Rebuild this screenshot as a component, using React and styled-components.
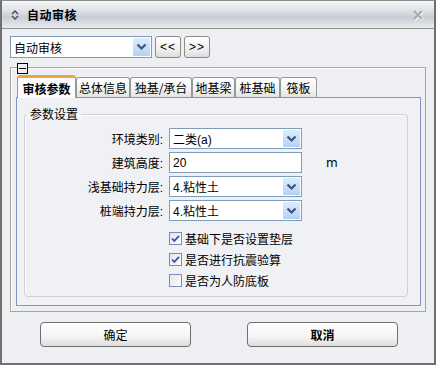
import React from "react";
import styled, { createGlobalStyle } from "styled-components";

const Global = createGlobalStyle`
  body {
    margin: 0;
    font-family: "Liberation Sans", "Noto Sans CJK SC", sans-serif;
    font-size: 12px;
    color: #000;
  }
`;

const Window = styled.div`
  width: 436px;
  height: 365px;
  box-sizing: border-box;
  border: 2px solid #707070;
  border-top: 1px solid #8c8c8c;
  background: #eeeff3;
  display: flex;
  flex-direction: column;
`;

const TitleBar = styled.div`
  height: 27px;
  flex: none;
  display: flex;
  align-items: center;
  padding: 0 10px 0 9px;
  border-bottom: 1px solid #8e8e8e;
  background: linear-gradient(#f6f7f9 0%, #dfe2e7 35%, #c8ccd4 60%, #dde0e5 85%, #e9ebee 100%);
`;

const Title = styled.span`
  margin-left: 8px;
  font-weight: bold;
  font-size: 12px;
  letter-spacing: 0.5px;
  font-family: "Noto Sans CJK SC", sans-serif;
`;

const Close = styled.span`
  margin-left: auto;
  display: flex;
`;

const Body = styled.div`
  padding: 7px 0 0 8px;
`;

const Toolbar = styled.div`
  display: flex;
  gap: 3px;
  height: 22px;
`;

const Combo = styled.div`
  width: ${(p) => p.$w}px;
  height: ${(p) => p.$h || 21}px;
  box-sizing: border-box;
  border: 1px solid #7f9db9;
  background: #fff;
  display: flex;
  align-items: center;
  padding-left: 3px;
  white-space: nowrap;
  overflow: hidden;
`;

const ComboText = styled.span`
  flex: 1;
`;

const DropBtn = styled.span`
  width: 17px;
  align-self: stretch;
  margin: 1px;
  display: flex;
  align-items: center;
  justify-content: center;
  background: linear-gradient(#dcecfd, #b4d2f6);
`;

const SmallBtn = styled.button`
  width: 26px;
  height: 22px;
  padding: 0;
  border: 1px solid #8a8a8a;
  border-radius: 3px;
  background: linear-gradient(#ffffff, #ececec 70%, #dcdcdc);
  font-family: "Liberation Sans", sans-serif;
  font-size: 12px;
  letter-spacing: 1px;
  color: #000;
`;

const Frame = styled.div`
  position: relative;
  margin-top: 9px;
  width: 416px;
  height: 245px;
  box-sizing: border-box;
  border: 1px solid #a9a691;
  box-shadow: inset 1px 1px 0 #fff;
  padding: 7px 4px 5px 5px;
  display: flex;
  flex-direction: column;
`;

const Collapse = styled.span`
  position: absolute;
  top: -5px;
  left: 6px;
  width: 9px;
  height: 9px;
  border: 1px solid #000;
  background: #eeeff3;
  display: flex;
  align-items: center;
  justify-content: center;
  &::after {
    content: "";
    width: 7px;
    height: 1px;
    background: #000;
  }
`;

const Tabs = styled.div`
  display: flex;
  align-items: flex-end;
  height: 22px;
  margin-left: 1px;
  position: relative;
  z-index: 1;
`;

const Tab = styled.div`
  width: ${(p) => p.$w}px;
  height: ${(p) => (p.$active ? 23 : 20)}px;
  box-sizing: border-box;
  display: flex;
  align-items: center;
  justify-content: center;
  border: 1px solid #919b9c;
  border-bottom: none;
  border-radius: 3px 3px 0 0;
  font-family: "Noto Sans CJK SC", sans-serif;
  font-size: 12px;
  white-space: nowrap;
  background: ${(p) => (p.$active ? "#fcfcfe" : "linear-gradient(#ffffff, #f3f3f0 60%, #e4e4dd)")};
  border-top: ${(p) => (p.$active ? "3px solid #f2a53a" : "1px solid #919b9c")};
  font-weight: ${(p) => (p.$active ? "bold" : "normal")};
  margin-bottom: ${(p) => (p.$active ? "-1px" : "0")};
`;

const Panel = styled.div`
  flex: 1;
  border: 1px solid #8494c0;
  background: #f0f1f5;
  padding: 8px 12px 8px 7px;
  display: flex;
`;

const Group = styled.fieldset`
  flex: 1;
  margin: 0;
  padding: 0 0 0 0;
  border: 1px solid #cfd0d8;
  border-radius: 4px;
  box-shadow: inset 1px 1px 0 #fff;
`;

const Legend = styled.legend`
  margin-left: 2px;
  padding: 0 3px;
  line-height: 16px;
  font-family: "Noto Sans CJK SC", sans-serif;
`;

const Form = styled.div`
  display: grid;
  grid-template-columns: 138px 133px auto;
  column-gap: 6px;
  row-gap: 3px;
  align-items: center;
  padding-top: 6px;
`;

const Label = styled.span`
  text-align: right;
  white-space: nowrap;
`;

const Unit = styled.span`
  padding-left: 18px;
  font-family: "DejaVu Sans", sans-serif;
  font-size: 12px;
`;

const Checks = styled.div`
  margin: 7px 0 0 144px;
`;

const CheckRow = styled.div`
  height: 21px;
  display: flex;
  align-items: center;
  gap: 3px;
  font-family: "Noto Sans CJK SC", sans-serif;
`;

const Box = styled.span`
  width: 13px;
  height: 13px;
  box-sizing: border-box;
  border: 1px solid #7d8cb6;
  background: linear-gradient(135deg, #e4e4ec, #ffffff);
  display: flex;
  align-items: center;
  justify-content: center;
`;

const Footer = styled.div`
  display: flex;
  gap: 56px;
  margin: 10px 0 0 30px;
`;

const Button = styled.button`
  width: 151px;
  height: 25px;
  border: 1px solid #6e6e6e;
  border-radius: 4px;
  background: linear-gradient(#ffffff, #f4f4f4 60%, #dedede);
  font-family: "Noto Sans CJK SC", sans-serif;
  font-size: 12px;
  font-weight: ${(p) => (p.$bold ? "bold" : "normal")};
  color: #000;
`;

const Chevron = () => (
  <svg width="11" height="8" viewBox="0 0 11 8">
    <path d="M1.5 1.5 L5.5 5.5 L9.5 1.5" fill="none" stroke="#3f5478" strokeWidth="2.2" />
  </svg>
);

function Select({ value, w }) {
  return (
    <Combo $w={w}>
      <ComboText>{value}</ComboText>
      <DropBtn>
        <Chevron />
      </DropBtn>
    </Combo>
  );
}

function Check({ checked, children }) {
  return (
    <CheckRow>
      <Box>
        {checked && (
          <svg width="9" height="9" viewBox="0 0 9 9">
            <path d="M1 4.5 L3.3 7 L8 1.8" fill="none" stroke="#3a4ea6" strokeWidth="1.8" />
          </svg>
        )}
      </Box>
      {children}
    </CheckRow>
  );
}

const tabs = [
  ["审核参数", 59],
  ["总体信息", 54],
  ["独基/承台", 62],
  ["地基梁", 43],
  ["桩基础", 45],
  ["筏板", 37],
];

export default function App() {
  return (
    <>
      <Global />
      <Window>
        <TitleBar>
          <svg width="8" height="12" viewBox="0 0 8 12">
            <path d="M1 5 L4 2 L7 5 M1 7 L4 10 L7 7" fill="none" stroke="#505050" strokeWidth="1.5" />
          </svg>
          <Title>自动审核</Title>
          <Close>
            <svg width="12" height="12" viewBox="0 0 12 12">
              <path d="M2 2 L10 10 M10 2 L2 10" stroke="#fff" strokeWidth="3" transform="translate(0.6 0.6)" />
              <path d="M2 2 L10 10 M10 2 L2 10" stroke="#a9abb0" strokeWidth="2.4" />
            </svg>
          </Close>
        </TitleBar>
        <Body>
          <Toolbar>
            <Combo $w={142} $h={22}>
              <ComboText>自动审核</ComboText>
              <DropBtn>
                <Chevron />
              </DropBtn>
            </Combo>
            <SmallBtn>&lt;&lt;</SmallBtn>
            <SmallBtn>&gt;&gt;</SmallBtn>
          </Toolbar>
          <Frame>
            <Collapse />
            <Tabs>
              {tabs.map(([t, w], i) => (
                <Tab key={t} $w={w} $active={i === 0}>
                  {t}
                </Tab>
              ))}
            </Tabs>
            <Panel>
              <Group>
                <Legend>参数设置</Legend>
                <Form>
                  <Label>环境类别:</Label>
                  <Select value="二类(a)" w={133} />
                  <span />
                  <Label>建筑高度:</Label>
                  <Combo $w={133}>20</Combo>
                  <Unit>m</Unit>
                  <Label>浅基础持力层:</Label>
                  <Select value="4.粘性土" w={133} />
                  <span />
                  <Label>桩端持力层:</Label>
                  <Select value="4.粘性土" w={133} />
                  <span />
                </Form>
                <Checks>
                  <Check checked>基础下是否设置垫层</Check>
                  <Check checked>是否进行抗震验算</Check>
                  <Check>是否为人防底板</Check>
                </Checks>
              </Group>
            </Panel>
          </Frame>
          <Footer>
            <Button>确定</Button>
            <Button $bold>取消</Button>
          </Footer>
        </Body>
      </Window>
    </>
  );
}
